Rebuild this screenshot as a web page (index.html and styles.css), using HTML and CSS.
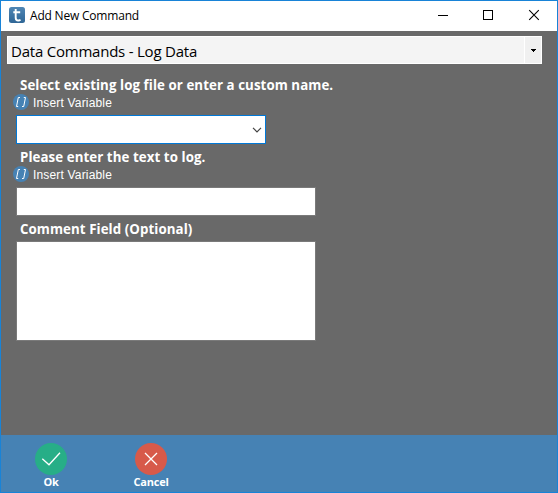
FILE: index.html
```
<!DOCTYPE html>
<html lang="en">
<head>
<meta charset="utf-8">
<title>Add New Command</title>
<link rel="stylesheet" href="styles.css">
</head>
<body>
<div class="window">
  <header class="titlebar">
    <svg class="app-icon" width="16" height="16" viewBox="0 0 16 16">
      <defs><linearGradient id="g" x1="0" y1="0" x2="0" y2="1"><stop offset="0" stop-color="#4f86b4"/><stop offset="1" stop-color="#2f6696"/></linearGradient></defs>
      <rect width="16" height="16" rx="2.5" fill="url(#g)"/>
      <path d="M6.700 2V10.700Q6.700 13.500 9.300 13.500Q10.600 13.500 11.500 12.600M4.300 5.300H11.200" fill="none" stroke="#fff" stroke-width="1.900"/>
    </svg>
    <h1 class="title">Add New Command</h1>
    <div class="controls">
      <svg width="46" height="30" viewBox="0 0 46 30"><path d="M18 14.5H28" stroke="#000"/></svg>
      <svg width="46" height="30" viewBox="0 0 46 30"><rect x="17.5" y="9.500" width="9" height="9" fill="none" stroke="#000"/></svg>
      <svg width="46" height="30" viewBox="0 0 46 30"><path d="M17.200 9.200L26.800 18.800M26.800 9.200L17.200 18.800" stroke="#000" stroke-width="1.100"/></svg>
    </div>
  </header>
  <main class="content">
    <div class="command-select">
      <span class="command-name">Data Commands - Log Data</span>
      <span class="command-arrow"><svg width="5" height="3" viewBox="0 0 5 3"><path d="M0 0H5V1H4V2H3V3H2V2H1V1H0Z"/></svg></span>
    </div>
    <form class="fields">
      <div class="label"><span>Select existing log file or enter a custom name.</span></div>
      <div class="insert">
        <svg width="16" height="16" viewBox="0 0 16 16"><circle cx="8" cy="8" r="8" fill="#4682b4"/><path d="M7 3.500H5.300L3.500 12.500H5.200M10.800 3.500H12.500L10.700 12.500H9" fill="none" stroke="#fff"/></svg>
        <span>Insert Variable</span>
      </div>
      <div class="box dropdown"><svg width="10" height="6" viewBox="0 0 10 6"><path d="M1 .8L5 4.800L9 .8" fill="none" stroke="#444" stroke-width="1.200"/></svg></div>
      <div class="label"><span>Please enter the text to log.</span></div>
      <div class="insert">
        <svg width="16" height="16" viewBox="0 0 16 16"><circle cx="8" cy="8" r="8" fill="#4682b4"/><path d="M7 3.500H5.300L3.500 12.500H5.200M10.800 3.500H12.500L10.700 12.500H9" fill="none" stroke="#fff"/></svg>
        <span>Insert Variable</span>
      </div>
      <div class="box text-input"></div>
      <div class="label"><span>Comment Field (Optional)</span></div>
      <div class="box comment"></div>
    </form>
  </main>
  <footer class="actions">
    <div class="action">
      <svg width="32" height="32" viewBox="0 0 32 32"><circle cx="16" cy="16" r="16" fill="#27ae87"/><path d="M7.300 15.800L14 21.800L25 9.700" fill="none" stroke="#fff" stroke-width="1.300"/></svg>
      <span>Ok</span>
    </div>
    <div class="action">
      <svg width="32" height="32" viewBox="0 0 32 32"><circle cx="16" cy="16" r="16" fill="#d75a4a"/><path d="M10 10L22 22M22 10L10 22" stroke="#fff" stroke-width="1.300"/></svg>
      <span>Cancel</span>
    </div>
  </footer>
</div>
</body>
</html>
```
FILE: styles.css
```
* { box-sizing: border-box; }
body { margin: 0; }
svg { display: block; flex: none; }
span, h1 { white-space: nowrap; }
.window {
  width: 558px;
  height: 493px;
  display: flex;
  flex-direction: column;
  border: 1px solid #1883d7;
  background: #696969;
  font-family: "Open Sans", "Noto Sans", sans-serif;
  color: #fff;
  overflow: hidden;
}
.titlebar {
  height: 30px;
  flex: none;
  display: flex;
  align-items: center;
  padding-left: 8px;
  background: #fff;
  color: #000;
}
.app-icon { margin-top: -2px; }
.title { margin: 0 0 0 5px; font-size: 12px; font-weight: 400; line-height: 16px; letter-spacing: -.2px; }
.controls { display: flex; margin-left: auto; margin-right: -1px; }
.content { flex: 1; padding: 5px 0 0 6px; }
.command-select {
  width: 535px;
  height: 28px;
  display: flex;
  border: 1px solid #fff;
  background: #f4f4f4;
  color: #000;
}
.command-name { flex: 1; padding-left: 3px; font-size: 15px; line-height: 28px; letter-spacing: -.22px; }
.command-arrow {
  width: 17px;
  display: flex;
  align-items: center;
  justify-content: center;
  border-left: 1px solid #fff;
  background: #f0f0f0;
}
.fields { padding: 11px 0 0 9px; }
.label { height: 19px; padding-left: 4px; font-size: 13.300px; font-weight: 700; line-height: 20px; letter-spacing: .07px; }
.insert {
  display: flex;
  align-items: center;
  gap: 4px;
  height: 16px;
  margin-left: -3px;
  font: 12px/16px "Liberation Sans", Arial, sans-serif;
  letter-spacing: .17px;
}
.insert span { padding-top: 2px; }
.box { width: 300px; height: 29px; margin-bottom: 4px; background: #fff; border: 1px solid #7a7a7a; }
.dropdown {
  width: 250px;
  margin-top: 5px;
  margin-bottom: 3px;
  border-color: #0078d7;
  display: flex;
  align-items: center;
  justify-content: flex-end;
  padding-right: 3px;
}
.text-input { margin-top: 5px; margin-bottom: 3px; }
.comment { height: 100px; margin-top: 3px; }
.actions { display: flex; gap: 40px; flex: none; height: 57px; padding: 8px 0 0 20px; background: #4682b4; }
.action { width: 60px; display: flex; flex-direction: column; align-items: center; font-size: 11px; font-weight: 700; line-height: 14px; letter-spacing: -.2px; }
```
